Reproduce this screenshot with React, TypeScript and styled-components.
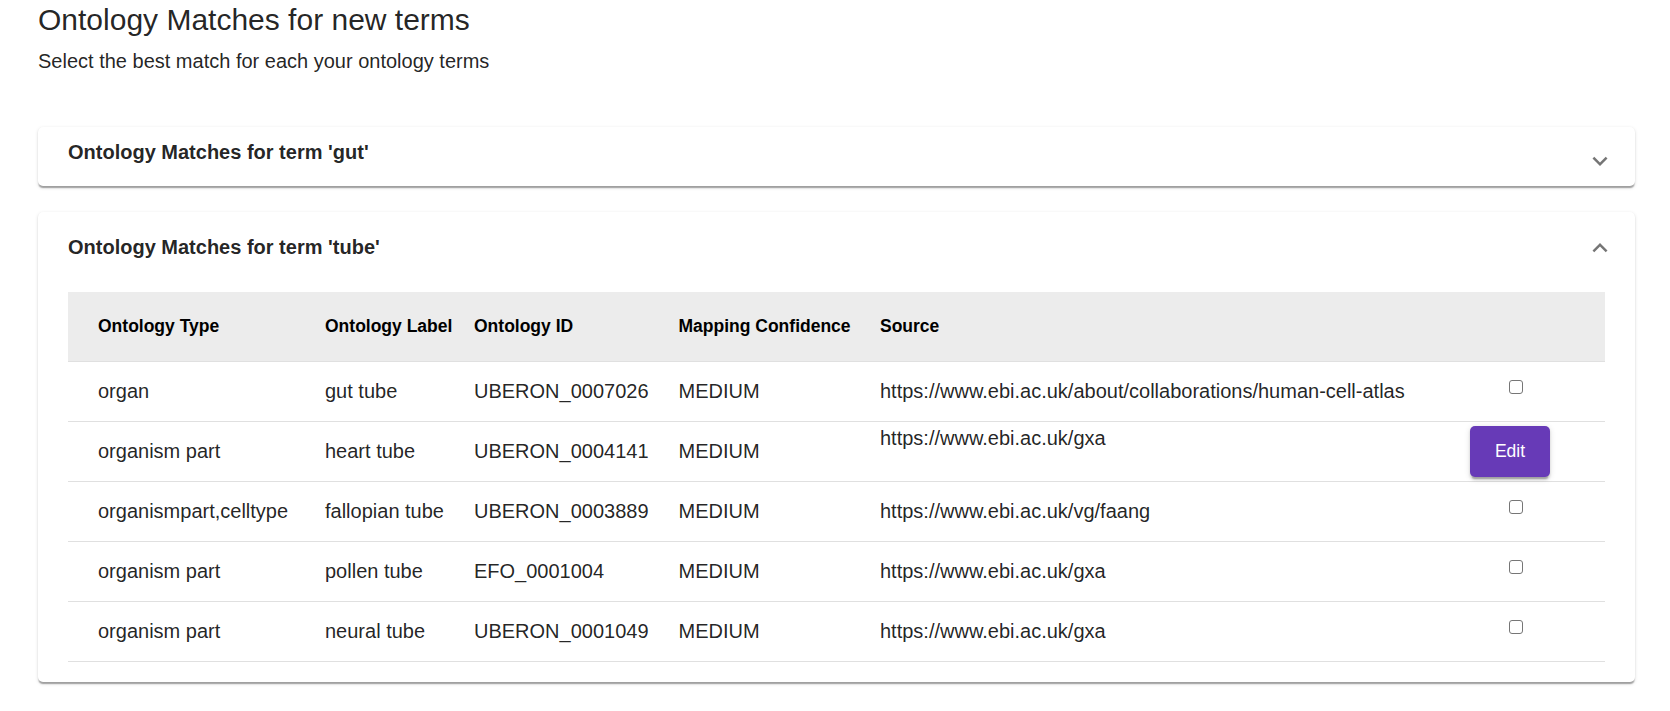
import React from "react";
import styled, { createGlobalStyle } from "styled-components";

const GlobalStyle = createGlobalStyle`
  html, body {
    margin: 0;
    padding: 0;
    background: #ffffff;
  }
  body {
    font-family: "Liberation Sans", Arial, Helvetica, sans-serif;
    color: rgba(0, 0, 0, 0.87);
  }
  * { box-sizing: border-box; }
`;

const Page = styled.main`
  padding: 0 35px 30px 38px;
`;

const Title = styled.h1`
  margin: 0;
  font-size: 30px;
  font-weight: 400;
  line-height: 40px;
  color: rgba(0, 0, 0, 0.87);
`;

const Subtitle = styled.p`
  margin: 6px 0 0;
  font-size: 20px;
  line-height: 30px;
  color: rgba(0, 0, 0, 0.87);
`;

const CardList = styled.div`
  display: flex;
  flex-direction: column;
  gap: 26px;
  margin-top: 51px;
`;

const Card = styled.section`
  background: #fff;
  border-radius: 5px;
  box-shadow: 0px 2.5px 1.25px -1.25px rgba(0, 0, 0, 0.2),
    0px 1.25px 1.25px 0px rgba(0, 0, 0, 0.14),
    0px 1.25px 3.75px 0px rgba(0, 0, 0, 0.12);
`;

const CardHeader = styled.div<{ $expanded?: boolean }>`
  display: flex;
  align-items: flex-start;
  justify-content: space-between;
  height: ${(p) => (p.$expanded ? 80 : 59)}px;
  padding: 0 20px 0 30px;
`;

const CardTitle = styled.h2<{ $expanded?: boolean }>`
  margin: ${(p) => (p.$expanded ? 20 : 9.5)}px 0 0;
  font-size: 20px;
  font-weight: 700;
  line-height: 30px;
  color: rgba(0, 0, 0, 0.87);
`;

const ChevronBox = styled.span<{ $expanded?: boolean }>`
  display: flex;
  width: 30px;
  height: 30px;
  margin-top: ${(p) => (p.$expanded ? 20.5 : 18.5)}px;
  svg {
    width: 30px;
    height: 30px;
    fill: rgba(0, 0, 0, 0.54);
  }
`;

const CardBody = styled.div`
  padding: 0 30px 20px 30px;
`;

const Table = styled.table`
  width: 100%;
  border-collapse: collapse;
  table-layout: fixed;
`;

const HeadRow = styled.tr`
  background: #ececec;
  height: 69px;
  border-bottom: 1px solid #e0e0e0;
`;

const HeadCell = styled.th`
  text-align: left;
  padding: 0;
  font-size: 17.5px;
  font-weight: 700;
  color: #000;
  vertical-align: middle;
  &:first-child { padding-left: 30px; }
`;

const BodyRow = styled.tr`
  height: 60px;
  border-bottom: 1px solid #e0e0e0;
`;

const Cell = styled.td<{ $raised?: boolean; $center?: boolean }>`
  padding: 0 0 ${(p) => (p.$raised ? 25 : 0)}px 0;
  font-size: 20px;
  line-height: 23px;
  color: rgba(0, 0, 0, 0.87);
  vertical-align: middle;
  white-space: nowrap;
  text-align: ${(p) => (p.$center ? "center" : "left")};
  &:first-child { padding-left: 30px; }
`;

const Check = styled.input.attrs({ type: "checkbox" })`
  appearance: none;
  display: block;
  width: 14px;
  height: 14px;
  margin: 0 auto 9px;
  border: 1.5px solid #767676;
  border-radius: 3px;
  background: #fff;
`;

const EditButton = styled.button`
  width: 80px;
  height: 51px;
  margin-right: 12px;
  border: none;
  border-radius: 5px;
  background: #673ab7;
  color: #fff;
  font-family: "Liberation Sans", Arial, sans-serif;
  font-size: 17.5px;
  cursor: pointer;
  box-shadow: 0px 3.75px 1.25px -2.5px rgba(0, 0, 0, 0.2),
    0px 2.5px 2.5px 0px rgba(0, 0, 0, 0.14),
    0px 1.25px 6.25px 0px rgba(0, 0, 0, 0.12);
`;

const ExpandMore = () => (
  <svg viewBox="0 0 24 24">
    <path d="M16.59 8.59 12 13.17 7.41 8.59 6 10l6 6 6-6z" />
  </svg>
);

const ExpandLess = () => (
  <svg viewBox="0 0 24 24">
    <path d="m12 8-6 6 1.41 1.41L12 10.83l4.59 4.58L18 14z" />
  </svg>
);

type Match = {
  type: string;
  label: string;
  id: string;
  confidence: string;
  source: string;
  editing?: boolean;
};

const matches: Match[] = [
  { type: "organ", label: "gut tube", id: "UBERON_0007026", confidence: "MEDIUM", source: "https://www.ebi.ac.uk/about/collaborations/human-cell-atlas" },
  { type: "organism part", label: "heart tube", id: "UBERON_0004141", confidence: "MEDIUM", source: "https://www.ebi.ac.uk/gxa", editing: true },
  { type: "organismpart,celltype", label: "fallopian tube", id: "UBERON_0003889", confidence: "MEDIUM", source: "https://www.ebi.ac.uk/vg/faang" },
  { type: "organism part", label: "pollen tube", id: "EFO_0001004", confidence: "MEDIUM", source: "https://www.ebi.ac.uk/gxa" },
  { type: "organism part", label: "neural tube", id: "UBERON_0001049", confidence: "MEDIUM", source: "https://www.ebi.ac.uk/gxa" },
];

export default function App() {
  return (
    <>
      <GlobalStyle />
      <Page>
        <Title>Ontology Matches for new terms</Title>
        <Subtitle>Select the best match for each your ontology terms</Subtitle>
        <CardList>
          <Card>
            <CardHeader>
              <CardTitle>Ontology Matches for term 'gut'</CardTitle>
              <ChevronBox>
                <ExpandMore />
              </ChevronBox>
            </CardHeader>
          </Card>
          <Card>
            <CardHeader $expanded>
              <CardTitle $expanded>Ontology Matches for term 'tube'</CardTitle>
              <ChevronBox $expanded>
                <ExpandLess />
              </ChevronBox>
            </CardHeader>
            <CardBody>
              <Table>
                <colgroup>
                  <col style={{ width: 257 }} />
                  <col style={{ width: 149 }} />
                  <col style={{ width: 204.5 }} />
                  <col style={{ width: 201.5 }} />
                  <col />
                  <col style={{ width: 178 }} />
                </colgroup>
                <thead>
                  <HeadRow>
                    <HeadCell>Ontology Type</HeadCell>
                    <HeadCell>Ontology Label</HeadCell>
                    <HeadCell>Ontology ID</HeadCell>
                    <HeadCell>Mapping Confidence</HeadCell>
                    <HeadCell>Source</HeadCell>
                    <HeadCell />
                  </HeadRow>
                </thead>
                <tbody>
                  {matches.map((m) => (
                    <BodyRow key={m.id}>
                      <Cell>{m.type}</Cell>
                      <Cell>{m.label}</Cell>
                      <Cell>{m.id}</Cell>
                      <Cell>{m.confidence}</Cell>
                      <Cell $raised={m.editing}>{m.source}</Cell>
                      <Cell $center>
                        {m.editing ? <EditButton>Edit</EditButton> : <Check aria-label={`select ${m.label}`} />}
                      </Cell>
                    </BodyRow>
                  ))}
                </tbody>
              </Table>
            </CardBody>
          </Card>
        </CardList>
      </Page>
    </>
  );
}
